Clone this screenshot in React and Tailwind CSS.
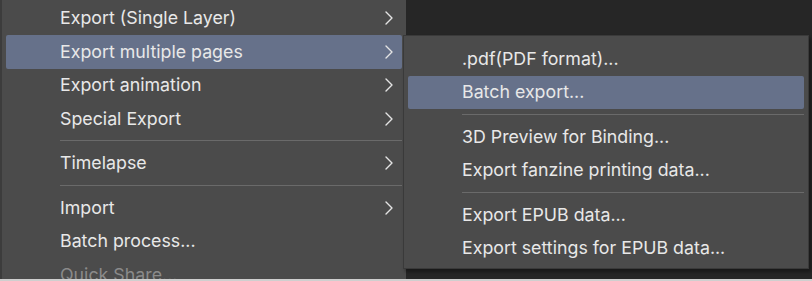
import React from 'react';

const mainItems = [
  { label: 'Export (Single Layer)', sub: true },
  { label: 'Export multiple pages', sub: true, active: true },
  { label: 'Export animation', sub: true },
  { label: 'Special Export', sub: true },
  { sep: true },
  { label: 'Timelapse', sub: true },
  { sep: true },
  { label: 'Import', sub: true },
  { label: 'Batch process...' },
  { label: 'Quick Share...', disabled: true },
];

const subItems = [
  { label: '.pdf(PDF format)...' },
  { label: 'Batch export...', active: true },
  { sep: true },
  { label: '3D Preview for Binding...' },
  { label: 'Export fanzine printing data...' },
  { sep: true },
  { label: 'Export EPUB data...' },
  { label: 'Export settings for EPUB data...' },
];

const Chevron = () => (
  <svg width="12" height="16" viewBox="0 0 12 16" className="shrink-0">
    <polyline points="3,2 9,8 3,14" fill="none" stroke="#e4e4e4" strokeWidth="1.4" strokeLinecap="round" strokeLinejoin="round" />
  </svg>
);

const MenuRow = ({ item }) => {
  if (item.sep) {
    return (
      <div className="h-[11px] pt-[4.5px] pl-[54px]">
        <div className="h-px bg-[#6a6a6a]" />
      </div>
    );
  }
  return (
    <div
      className={`flex h-[33.5px] items-center justify-between rounded-[2px] pl-[54px] pr-[7px] text-[17.8px] ${
        item.active ? 'bg-[#66718a]' : ''
      } ${item.disabled ? 'text-[#8a8a8a]' : 'text-[#e8e8e8]'}`}
    >
      <span className="whitespace-nowrap">{item.label}</span>
      {item.sub && <Chevron />}
    </div>
  );
};

export default function App() {
  return (
    <div className="flex h-[281px] w-[812px] flex-col overflow-hidden bg-[#262626] font-['Inter','Liberation_Sans',sans-serif] leading-none">
      <div className="relative flex-1 overflow-hidden">
        {/* main menu */}
        <div className="h-full w-[406px] border-l-2 border-[#3c3c3c] bg-[#4b4b4b] px-[4px] pt-[1.5px]">
          {mainItems.map((item, i) => (
            <MenuRow key={i} item={item} />
          ))}
        </div>

        {/* submenu */}
        <div className="absolute left-[403px] top-[35px] w-[406px] border border-[#3a3a3a] bg-[#4b4b4b] px-[4px] pt-[6px] pb-[3px] shadow-[2px_3px_3px_rgba(0,0,0,0.35)]">
          {subItems.map((item, i) => (
            <MenuRow key={i} item={item} />
          ))}
        </div>
      </div>
      <div className="h-[2px] bg-[#cfcfcf]" />
    </div>
  );
}
